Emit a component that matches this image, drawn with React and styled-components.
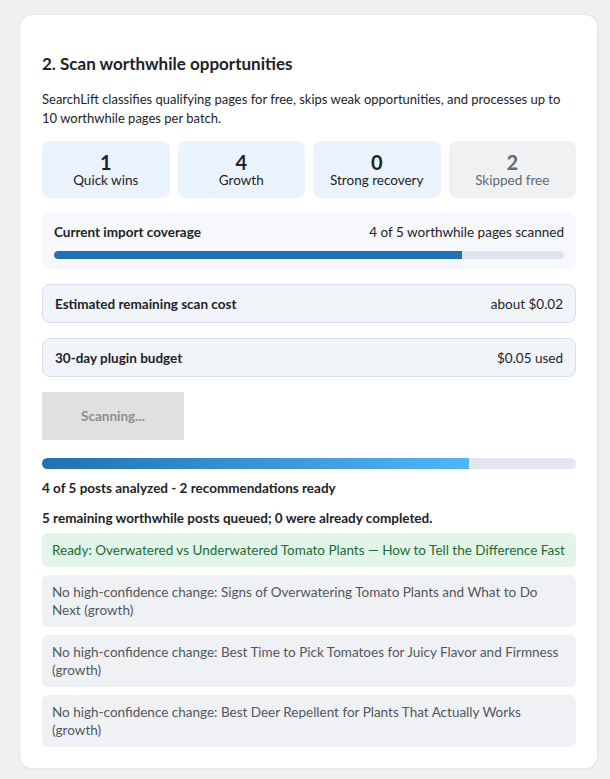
import React from 'react';
import styled, { createGlobalStyle } from 'styled-components';

const GlobalStyle = createGlobalStyle`
    body {
        margin : 0;
        background : #f0f0f1;
        font-family : Lato, "Noto Sans", sans-serif;
        color : #1d2327;
    }
`

const stats = [
    { value : 1, label : 'Quick wins' },
    { value : 4, label : 'Growth' },
    { value : 0, label : 'Strong recovery' },
    { value : 2, label : 'Skipped free', muted : true },
];

const results = [
    { text : 'Ready: Overwatered vs Underwatered Tomato Plants — How to Tell the Difference Fast', ready : true },
    { text : 'No high-confidence change: Signs of Overwatering Tomato Plants and What to Do Next (growth)' },
    { text : 'No high-confidence change: Best Time to Pick Tomatoes for Juicy Flavor and Firmness (growth)' },
    { text : 'No high-confidence change: Best Deer Repellent for Plants That Actually Works (growth)' },
];

function App(){
    const coverage = 80;
    const progress = 80;

    return(
        <Page>
            <GlobalStyle/>
            <Card>
                <Title>2. Scan worthwhile opportunities</Title>
                <Intro>
                    SearchLift classifies qualifying pages for free, skips weak opportunities, and processes up to 10 worthwhile pages per batch.
                </Intro>

                <StatGrid>
                    {
                        stats.map((s, i)=>{
                            return (
                                <StatBox key={i} $muted={s.muted}>
                                    <StatValue>{ s.value }</StatValue>
                                    <StatLabel>{ s.label }</StatLabel>
                                </StatBox>
                            )
                        })
                    }
                </StatGrid>

                <CoverageBox>
                    <InfoRow>
                        <Strong>Current import coverage</Strong>
                        <span>4 of 5 worthwhile pages scanned</span>
                    </InfoRow>
                    <CoverageTrack>
                        <CoverageFill style={{ width : coverage + '%' }}/>
                    </CoverageTrack>
                </CoverageBox>

                <InfoBox>
                    <Strong>Estimated remaining scan cost</Strong>
                    <span>about $0.02</span>
                </InfoBox>

                <InfoBox>
                    <Strong>30-day plugin budget</Strong>
                    <span>$0.05 used</span>
                </InfoBox>

                <ScanBtn disabled>Scanning...</ScanBtn>

                <ProgressTrack>
                    <ProgressFill style={{ width : progress + '%' }}/>
                </ProgressTrack>

                <StatusText>4 of 5 posts analyzed - 2 recommendations ready</StatusText>
                <QueueText>5 remaining worthwhile posts queued; 0 were already completed.</QueueText>

                <ResultList>
                    {
                        results.map((r, i)=>{
                            return <ResultItem key={i} $ready={r.ready}>{ r.text }</ResultItem>
                        })
                    }
                </ResultList>
            </Card>
        </Page>
    )
}

export default App

const Page = styled.div`
    padding : 15px 13px 11px 20px;
`

const Card = styled.div`
    background : #fff;
    border-radius : 12px;
    box-shadow : 0 0 0 1px #e4e6ea, 0 1px 3px rgba(0,0,0,0.06);
    padding : 37px 21px 21px 22px;
    font-size : 13.5px;
`

const Title = styled.h2`
    margin : 0 0 14px;
    font-size : 17px;
    font-weight : 700;
    color : #1d2327;
    line-height : 24px;
`

const Intro = styled.p`
    margin : 0 0 13px;
    font-size : 13px;
    line-height : 19px;
    color : #1d2327;
`

const StatGrid = styled.div`
    display : grid;
    grid-template-columns : repeat(4, 1fr);
    gap : 8px;
    margin-bottom : 14px;
`

const StatBox = styled.div`
    height : 57px;
    border-radius : 8px;
    background : ${ props => props.$muted ? '#f0f1f3' : '#ebf3ff' };
    color : ${ props => props.$muted ? '#646970' : '#1d2327' };
    display : flex;
    flex-direction : column;
    align-items : center;
    justify-content : center;
    padding-top : 2px;
    box-sizing : border-box;
`

const StatValue = styled.div`
    font-size : 20px;
    font-weight : 700;
    line-height : 20px;
`

const StatLabel = styled.div`
    line-height : 17px;
`

const CoverageBox = styled.div`
    background : #f6f8fc;
    border-radius : 8px;
    padding : 11px 12px 10px 12px;
    margin-bottom : 15px;
`

const InfoRow = styled.div`
    display : flex;
    justify-content : space-between;
    line-height : 18px;
    margin-bottom : 10px;
`

const Strong = styled.span`
    font-weight : 700;
`

const CoverageTrack = styled.div`
    height : 8px;
    border-radius : 4px;
    background : #dfe5ef;
    overflow : hidden;
`

const CoverageFill = styled.div`
    height : 100%;
    background : #2271b1;
    border-radius : 4px 0 0 4px;
`

const InfoBox = styled.div`
    display : flex;
    justify-content : space-between;
    align-items : center;
    height : 39px;
    box-sizing : border-box;
    padding : 0 12px;
    border : 1px solid #d5deec;
    border-radius : 8px;
    background : #f1f4f9;
    margin-bottom : 15px;
`

const ScanBtn = styled.button`
    display : block;
    width : 142px;
    height : 48px;
    border : none;
    border-radius : 2px;
    background : #e0e0e0;
    color : #8c8f94;
    font-family : inherit;
    font-size : 13.5px;
    font-weight : 700;
    margin-bottom : 18px;
`

const ProgressTrack = styled.div`
    height : 11px;
    border-radius : 6px;
    background : #e2e6ed;
    overflow : hidden;
    margin-bottom : 10px;
`

const ProgressFill = styled.div`
    height : 100%;
    background : linear-gradient(90deg, #2271b1, #54b4f8);
`

const StatusText = styled.p`
    margin : 0 0 12px;
    font-weight : 700;
    line-height : 18px;
`

const QueueText = styled.p`
    margin : 0 0 6px;
    font-weight : 700;
    line-height : 18px;
`

const ResultList = styled.div`
    display : flex;
    flex-direction : column;
    gap : 8px;
`

const ResultItem = styled.div`
    padding : 8px 10px;
    border-radius : 6px;
    font-size : 13.5px;
    line-height : 18px;
    background : ${ props => props.$ready ? '#e3f5e8' : '#f0f1f4' };
    color : ${ props => props.$ready ? '#1e6b35' : '#50575e' };
`
